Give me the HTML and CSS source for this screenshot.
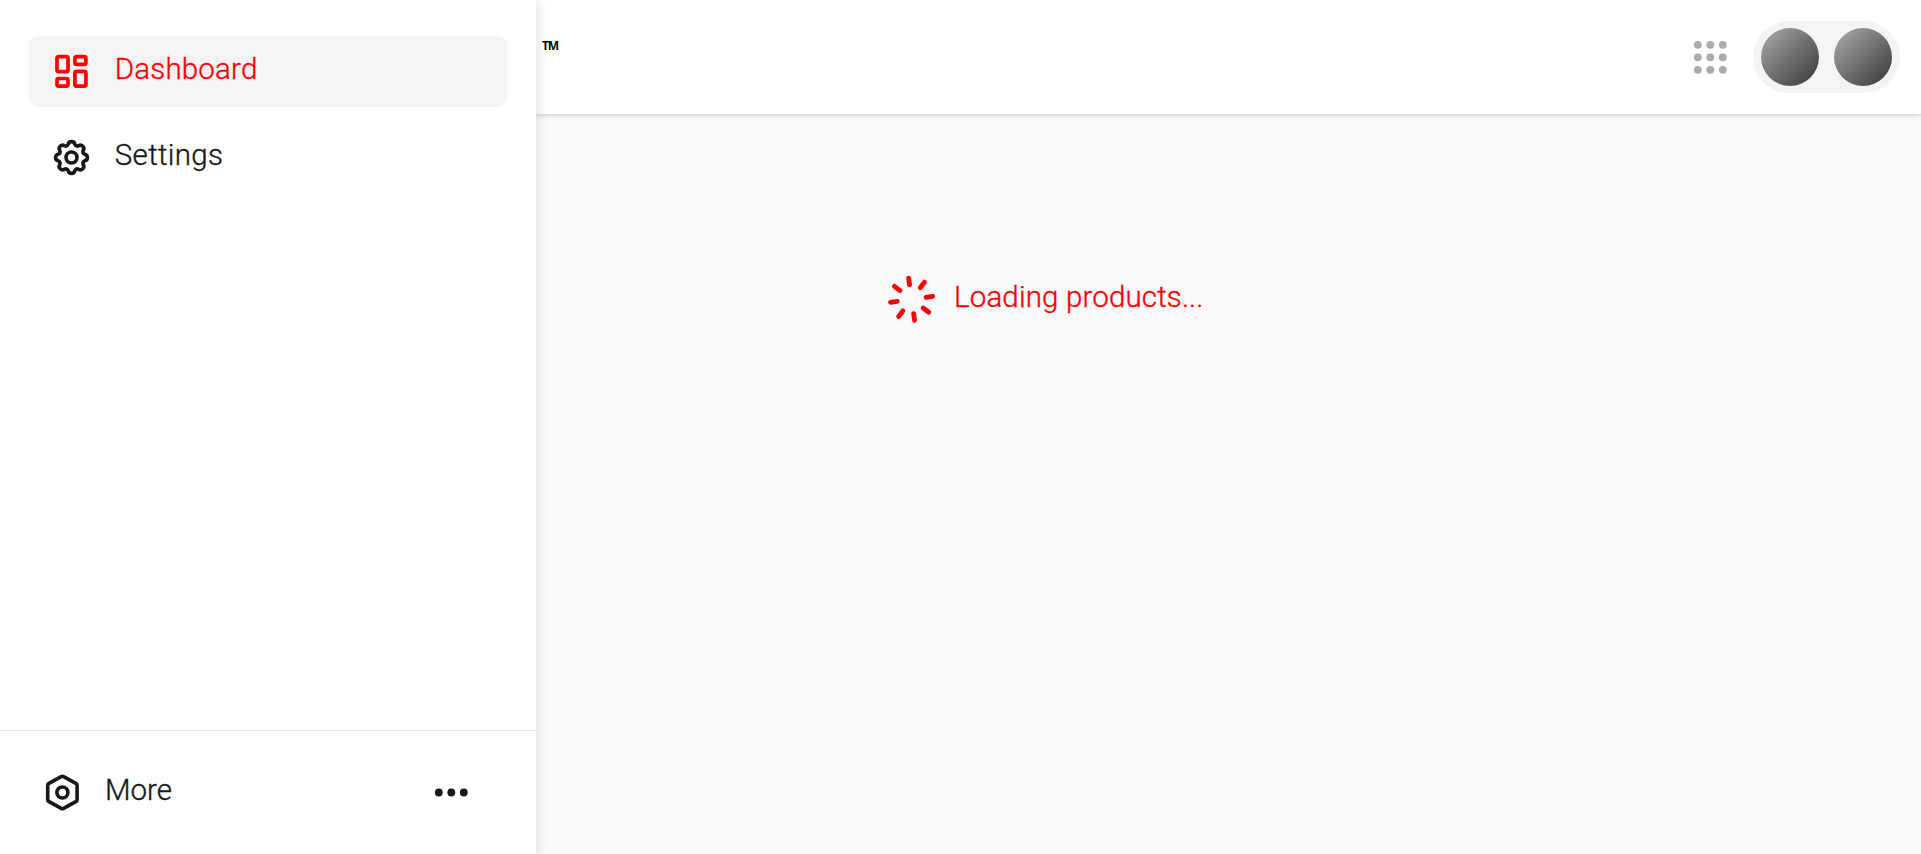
FILE: index.html
```html
<!DOCTYPE html>
<html lang="en">
<head>
<meta charset="utf-8">
<title>Dashboard</title>
<link rel="stylesheet" href="styles.css">
</head>
<body>
<div class="app">
  <aside class="sidebar">
    <nav class="nav">
      <a class="nav-item active">
        <svg class="icon" viewBox="0 0 38 38" fill="none" stroke="currentColor" stroke-width="3.7">
          <rect x="4" y="3.7" width="11" height="14.9" rx="1.6"/>
          <rect x="21.9" y="3.7" width="11" height="7.6" rx="1.6"/>
          <rect x="21.9" y="18.4" width="11" height="14.7" rx="1.6"/>
          <rect x="4" y="25.5" width="11" height="7.6" rx="1.6"/>
        </svg>
        <span class="label label-dashboard">Dashboard</span>
      </a>
      <a class="nav-item">
        <svg class="icon" viewBox="-18.5 -18.5 38 38" fill="none" stroke="currentColor" stroke-width="3.6" stroke-linejoin="round">
          <path d="M-3.29-13.2A3.35 3.35 0 0 1 3.29-13.2A3 3 0 0 0 7-11.66A3.35 3.35 0 0 1 11.66-7A3 3 0 0 0 13.2-3.29A3.35 3.35 0 0 1 13.2 3.29A3 3 0 0 0 11.66 7A3.35 3.35 0 0 1 7 11.66A3 3 0 0 0 3.29 13.2A3.35 3.35 0 0 1-3.29 13.2A3 3 0 0 0-7 11.66A3.35 3.35 0 0 1-11.66 7A3 3 0 0 0-13.2 3.29A3.35 3.35 0 0 1-13.2-3.29A3 3 0 0 0-11.66-7A3.35 3.35 0 0 1-7-11.66A3 3 0 0 0-3.29-13.2Z"/>
          <circle r="5.5"/>
        </svg>
        <span class="label label-settings">Settings</span>
      </a>
    </nav>
    <div class="more">
      <svg class="icon" viewBox="-19.4 -18.5 38 38" fill="none" stroke="currentColor" stroke-width="3.6" stroke-linejoin="round">
        <path d="M-1.2-15.9Q0-16.5 1.2-15.9L13.4-9.1Q14.7-8.3 14.7-6.9V6.9Q14.7 8.3 13.4 9.1L1.2 15.9Q0 16.5-1.2 15.9L-13.4 9.1Q-14.7 8.3-14.7 6.9V-6.9Q-14.7-8.3-13.4-9.1Z"/>
        <circle r="5.5"/>
      </svg>
      <span class="label label-more">More</span>
      <svg class="dots" viewBox="-18.3 -18.5 38 38" fill="currentColor">
        <circle cx="-12.5" r="3.9"/><circle r="3.9"/><circle cx="12.5" r="3.9"/>
      </svg>
    </div>
  </aside>
  <div class="content">
    <header class="topbar">
      <span class="trademark">TM</span>
      <svg class="apps" viewBox="-18.3 -19.3 38 38" fill="currentColor">
        <circle cx="-12.5" cy="-12.5" r="3.9"/><circle cy="-12.5" r="3.9"/><circle cx="12.5" cy="-12.5" r="3.9"/>
        <circle cx="-12.5" r="3.9"/><circle r="3.9"/><circle cx="12.5" r="3.9"/>
        <circle cx="-12.5" cy="12.5" r="3.9"/><circle cy="12.5" r="3.9"/><circle cx="12.5" cy="12.5" r="3.9"/>
      </svg>
      <div class="avatars"><span class="avatar"></span><span class="avatar"></span></div>
    </header>
    <main class="loading">
      <svg class="spinner" viewBox="-24.6 -25.3 50 50" stroke="currentColor" stroke-width="4.8" stroke-linecap="round">
        <g transform="rotate(-8)">
          <path d="M0-21.3V-14.5M0 21.3V14.5M-21.3 0H-14.5M21.3 0H14.5M-15.2-15.2L-10.2-10.2M15.2 15.2L10.2 10.2M15.2-15.2L10.2-10.2M-15.2 15.2L-10.2 10.2"/>
        </g>
      </svg>
      <span class="label label-loading">Loading products...</span>
    </main>
  </div>
</div>
</body>
</html>
```
FILE: styles.css
```css
* { box-sizing: border-box; }
body {
  margin: 0;
  background: #fafafa;
  color: #171717;
  font-family: Roboto, "Liberation Sans", sans-serif;
  font-size: 29.5px;
  font-weight: 300;
}
.app { display: flex; height: 854px; overflow: hidden; }
.sidebar {
  position: relative;
  z-index: 2;
  display: flex;
  flex-direction: column;
  justify-content: space-between;
  width: 536px;
  flex: none;
  background: #fff;
  box-shadow: 0 0 12px rgba(0, 0, 0, .15);
}
.nav {
  display: flex;
  flex-direction: column;
  gap: 15px;
  padding: 36px 29px;
}
.nav-item {
  display: flex;
  align-items: center;
  height: 71px;
  padding: 0 24px;
  gap: 23.7px;
  border-radius: 10px;
}
.nav-item.active { background: #f4f4f4; color: #f00; }
.icon, .dots, .apps { width: 38px; height: 38px; flex: none; }
.label {
  line-height: 36px;
  padding-bottom: 5px;
  white-space: nowrap;
  -webkit-text-stroke: .35px currentColor;
}
.label-dashboard { letter-spacing: .2px; }
.label-settings { letter-spacing: .35px; }
.label-more { letter-spacing: 0; }
.label-loading { letter-spacing: .15px; }
.more {
  display: flex;
  align-items: center;
  height: 124px;
  padding: 0 65px 0 43px;
  gap: 24px;
  border-top: 1px solid #e2e5f0;
}
.dots { margin-left: auto; }
.content { display: flex; flex-direction: column; flex: 1; min-width: 0; }
.topbar {
  display: flex;
  align-items: center;
  height: 114px;
  flex: none;
  padding: 0 21px 0 6px;
  background: #fff;
  box-shadow: 0 1px 5px rgba(0, 0, 0, .2);
}
.trademark {
  margin-bottom: 23px;
  color: #000;
  font: 700 12px/16px "Noto Sans", sans-serif;
  letter-spacing: -1.1px;
}
.apps { margin-left: auto; margin-right: 23px; color: #ababab; }
.avatars {
  display: flex;
  align-items: center;
  justify-content: space-between;
  width: 147px;
  height: 72px;
  padding: 0 8px 0 7.5px;
  border-radius: 36px;
  background: #f4f4f4;
}
.avatar {
  width: 58px;
  height: 58px;
  border-radius: 50%;
  background: linear-gradient(135deg, #adadad, #353535);
}
.loading {
  display: flex;
  align-items: center;
  height: 50px;
  margin-top: 160px;
  padding-left: 351px;
  gap: 17px;
  color: #f00;
}
.spinner { width: 50px; height: 50px; flex: none; }
```
